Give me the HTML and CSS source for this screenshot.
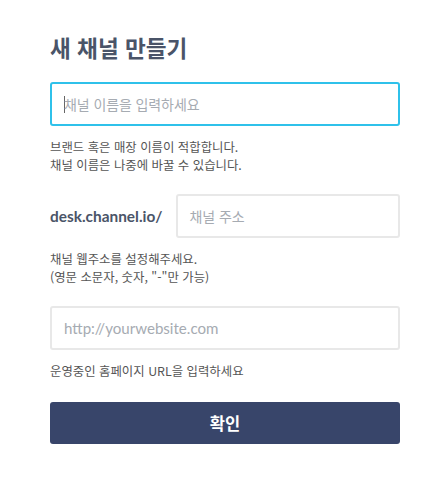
FILE: index.html
```html
<!DOCTYPE html>
<html lang="ko">
<head>
<meta charset="utf-8">
<link rel="stylesheet" href="styles.css">
</head>
<body>
<div class="page">
  <h1 class="title">새 채널 만들기</h1>
  <div class="field focused"><span class="caret"></span><span class="ph ko">채널 이름을 입력하세요</span></div>
  <p class="help">브랜드 혹은 매장 이름이 적합합니다.<br>채널 이름은 나중에 바꿀 수 있습니다.</p>
  <div class="row">
    <span class="prefix">desk.channel.io/</span>
    <div class="field grow"><span class="ph ko">채널 주소</span></div>
  </div>
  <p class="help">채널 웹주소를 설정해주세요.<br>(영문 소문자, 숫자, "-"만 가능)</p>
  <div class="field"><span class="ph">http://yourwebsite.com</span></div>
  <p class="help last">운영중인 홈페이지 URL을 입력하세요</p>
  <button class="submit">확인</button>
</div>
</body>
</html>
```

FILE: styles.css
```css
* { box-sizing: border-box; }
html, body { margin: 0; padding: 0; background: #fff; }
body {
  font-family: Lato, "Noto Sans CJK KR", sans-serif;
  color: #555;
}
.page {
  width: 442px;
  padding: 32px 42px 0 50px;
}
.title {
  margin: 0 0 18px;
  font-family: "Noto Sans CJK KR", sans-serif;
  font-size: 22.6px;
  line-height: 32px;
  font-weight: 700;
  color: #4a5468;
}
.field {
  height: 44px;
  border: 2px solid #e8e8e8;
  border-radius: 3px;
  display: flex;
  align-items: center;
  padding-left: 12px;
  background: #fff;
}
.field.focused { border-color: #2fc1ea; }
.caret {
  width: 1px;
  height: 17px;
  background: #666;
  margin-right: -1px;
}
.ph {
  font-size: 15.1px;
  color: #a6abb2;
}
.ph.ko {
  font-family: "Noto Sans CJK KR", sans-serif;
  font-size: 14px;
  letter-spacing: -0.1px;
}
.help {
  margin: 12px 0 20px;
  font-family: "Noto Sans CJK KR", sans-serif;
  font-size: 12.4px;
  line-height: 18px;
  color: #555;
}
.help.last { margin-bottom: 22px; }
.row {
  display: flex;
  align-items: center;
  gap: 13px;
}
.prefix {
  font-size: 15.4px;
  font-weight: 700;
  color: #4a5468;
}
.grow { flex: 1; }
.submit {
  display: block;
  width: 100%;
  height: 42px;
  border: 0;
  border-radius: 3px;
  background: #38456a;
  color: #fff;
  font-family: "Noto Sans CJK KR", sans-serif;
  font-size: 16.5px;
  font-weight: 700;
}
```
